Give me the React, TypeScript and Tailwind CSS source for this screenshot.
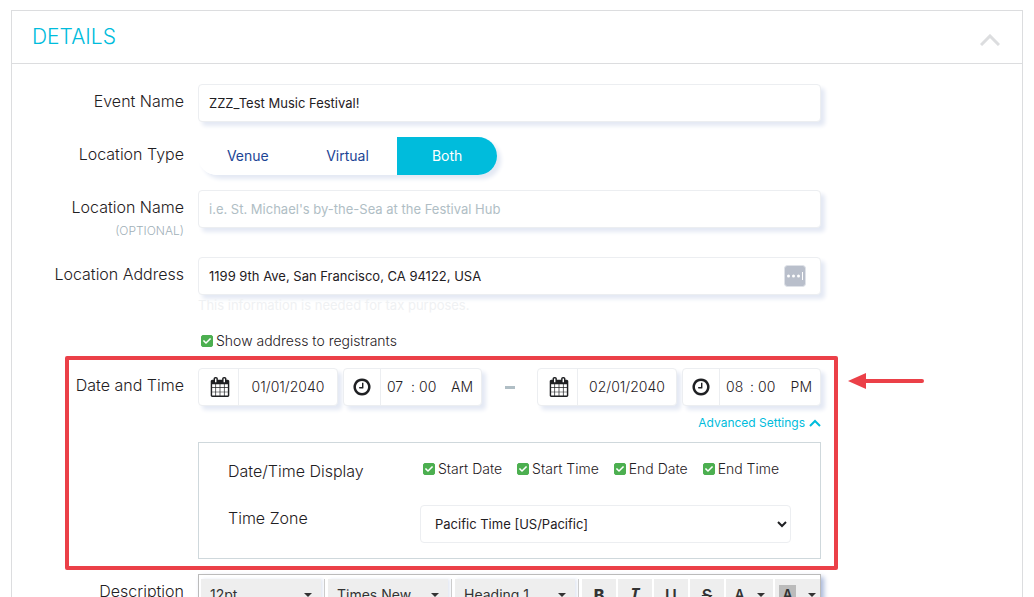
import { useState } from "react";
import type { ReactNode } from "react";
import clsx from "clsx";
import { FaCheck } from "react-icons/fa";

const locationTypes = ["Venue", "Virtual", "Both"];

const displayOptions = ["Start Date", "Start Time", "End Date", "End Time"];

const fieldClass =
  "h-[38px] w-full rounded border border-[#eceef1] bg-white px-[10px] text-[13px] text-[#1f2023] shadow-[4px_4px_4px_#e4e9f4] outline-none placeholder:text-[#b0bec5]";

function CalendarIcon() {
  return (
    <svg viewBox="0 0 1792 1792" className="h-5 w-5" fill="currentColor" aria-hidden="true">
      <path d="M192 1664h288v-288h-288v288zm352 0h320v-288h-320v288zm-352-352h288v-320h-288v320zm352 0h320v-320h-320v320zm-352-384h288v-288h-288v288zm736 736h320v-288h-320v288zm-384-736h320v-288h-320v288zm768 736h288v-288h-288v288zm-384-352h320v-320h-320v320zm-352-864v-288q0-13-9.5-22.5t-22.5-9.5h-64q-13 0-22.5 9.5t-9.5 22.5v288q0 13 9.5 22.5t22.5 9.5h64q13 0 22.5-9.5t9.5-22.5zm736 864h288v-320h-288v320zm-384-384h320v-288h-320v288zm384 0h288v-288h-288v288zm32-480v-288q0-13-9.5-22.5t-22.5-9.5h-64q-13 0-22.5 9.5t-9.5 22.5v288q0 13 9.5 22.5t22.5 9.5h64q13 0 22.5-9.5t9.5-22.5zm384-64v1280q0 52-38 90t-90 38h-1408q-52 0-90-38t-38-90v-1280q0-52 38-90t90-38h128v-96q0-66 47-113t113-47h64q66 0 113 47t47 113v96h384v-96q0-66 47-113t113-47h64q66 0 113 47t47 113v96h128q52 0 90 38t38 90z" />
    </svg>
  );
}

function ClockIcon() {
  return (
    <svg viewBox="0 0 1792 1792" className="h-5 w-5" fill="currentColor" aria-hidden="true">
      <path d="M1024 544v448q0 14-9 23t-23 9h-320q-14 0-23-9t-9-23v-64q0-14 9-23t23-9h224v-352q0-14 9-23t23-9h64q14 0 23 9t9 23zm416 352q0-148-73-273t-198-198-273-73-273 73-198 198-73 273 73 273 198 198 273 73 273-73 198-198 73-273zm224 0q0 209-103 385.5t-279.5 279.5-385.5 103-385.5-103-279.5-279.5-103-385.5 103-385.5 279.5-279.5 385.5-103 385.5 103 279.5 279.5 103 385.5z" />
    </svg>
  );
}

function Caret() {
  return (
    <svg viewBox="0 0 8 4" className="h-1 w-2" fill="#333" aria-hidden="true">
      <path d="M0 0h8L4 4z" />
    </svg>
  );
}

function Row({ label, htmlFor, hint, children }: {
  label: string;
  htmlFor?: string;
  hint?: string;
  children: ReactNode;
}) {
  return (
    <div className="grid grid-cols-[172px_minmax(0,1fr)] gap-x-[14px]">
      <div className="pt-[5px] text-right">
        <label htmlFor={htmlFor} className="block text-base leading-6 font-light text-[#1f2023]">
          {label}
        </label>
        {hint && <p className="pt-1 text-xs leading-4 font-light text-[#9fb0b8]">{hint}</p>}
      </div>
      <div>{children}</div>
    </div>
  );
}

function CheckOption({ label }: { label: string }) {
  return (
    <label className="flex items-center gap-[3px] text-sm leading-5 font-light text-[#1f2023]">
      <span className="grid place-items-center">
        <input
          type="checkbox"
          defaultChecked
          className="peer col-start-1 row-start-1 h-3 w-3 appearance-none rounded-xs border border-[#4caf50] checked:bg-[#4caf50]"
        />
        <FaCheck
          className="pointer-events-none col-start-1 row-start-1 hidden h-2 w-2 text-white peer-checked:block"
          aria-hidden="true"
        />
      </span>
      {label}
    </label>
  );
}

function DateTime({ name, date, hour, minute, period }: {
  name: string;
  date: string;
  hour: string;
  minute: string;
  period: string;
}) {
  const boxClass =
    "flex h-[38px] rounded border border-[#eceef1] bg-white text-[#1f2023] shadow-[4px_4px_4px_#e4e9f4]";
  return (
    <div className="flex gap-[5px]">
      <div className={clsx(boxClass, "w-[140px]")}>
        <span className="flex w-10 shrink-0 items-center justify-center border-r border-[#eceef1] pl-[2px]">
          <CalendarIcon />
        </span>
        <input
          aria-label={`${name} date`}
          defaultValue={date}
          className="w-full min-w-0 text-center text-sm font-light outline-none"
        />
      </div>
      <div className={clsx(boxClass, "w-[139px]")}>
        <span className="flex w-[37px] shrink-0 items-center justify-center border-r border-[#eceef1]">
          <ClockIcon />
        </span>
        <span className="flex min-w-0 flex-1 items-center pr-2 pl-[6px] text-sm font-light">
          <input aria-label={`${name} hour`} defaultValue={hour} className="w-5 outline-none" />
          <span className="w-3 text-center">:</span>
          <input aria-label={`${name} minute`} defaultValue={minute} className="w-5 outline-none" />
          <input
            aria-label={`${name} AM or PM`}
            defaultValue={period}
            className="ml-auto w-7 text-right outline-none"
          />
        </span>
      </div>
    </div>
  );
}

function ToolbarSelect({ label, value }: { label: string; value: string }) {
  return (
    <span className="flex items-center gap-[3px]">
      <span className="grid w-[120px] items-center bg-[#eee] shadow-[2px_0_3px_#e4e9f4]">
        <select
          aria-label={label}
          className="col-start-1 row-start-1 h-8 w-full appearance-none px-[9px] text-sm text-[#333] outline-none"
        >
          <option>{value}</option>
        </select>
        <span className="pointer-events-none col-start-1 row-start-1 mr-[9px] justify-self-end">
          <Caret />
        </span>
      </span>
      <span className="h-8 w-px bg-[#ccc]" />
    </span>
  );
}

function ToolbarButton({ label, className, children }: {
  label: string;
  className?: string;
  children: ReactNode;
}) {
  return (
    <button
      type="button"
      aria-label={label}
      className={clsx(
        "flex h-8 items-center justify-center bg-[#eee] text-base font-semibold text-[#333]",
        className ?? "w-[34px]"
      )}
    >
      {children}
    </button>
  );
}

export default function App() {
  const [locationType, setLocationType] = useState("Both");

  return (
    <main className="h-screen overflow-hidden bg-white px-[11px] pt-[10px] font-['Inter','Liberation_Sans',sans-serif]">
      <section className="border border-[#dcdddf]">
        <header className="flex h-[53px] items-center justify-between border-b border-[#dcdddf] pr-[22px] pl-5">
          <h2 className="text-[21px] font-light text-[#00bcdc]">DETAILS</h2>
          <button type="button" aria-label="Collapse details" className="pt-[6px]">
            <svg viewBox="0 0 20 12" className="h-3 w-5" fill="none" stroke="#dcdddf" strokeWidth="3">
              <path d="M1 11l9-9 9 9" />
            </svg>
          </button>
        </header>

        <form className="flex flex-col pt-5 pr-[201px]">
          <Row label="Event Name" htmlFor="event-name">
            <input id="event-name" defaultValue="ZZZ_Test Music Festival!" className={fieldClass} />
          </Row>

          <div className="pt-[15px]">
            <Row label="Location Type">
              <div className="grid h-[38px] w-[299px] grid-cols-3 overflow-hidden rounded-full text-sm shadow-[4px_4px_4px_#e4e9f4]">
                {locationTypes.map((type) => (
                  <button
                    key={type}
                    type="button"
                    aria-pressed={type === locationType}
                    onClick={() => setLocationType(type)}
                    className={type === locationType ? "bg-[#00bcdc] text-white" : "bg-white text-[#1c4595]"}
                  >
                    {type}
                  </button>
                ))}
              </div>
            </Row>
          </div>

          <div className="pt-[15px]">
            <Row label="Location Name" htmlFor="location-name" hint="(OPTIONAL)">
              <input
                id="location-name"
                placeholder="i.e. St. Michael's by-the-Sea at the Festival Hub"
                className={fieldClass}
              />
            </Row>
          </div>

          <div className="pt-[18px]">
            <Row label="Location Address" htmlFor="location-address">
              <div className="grid items-center">
                <input
                  id="location-address"
                  defaultValue="1199 9th Ave, San Francisco, CA 94122, USA"
                  className={clsx(fieldClass, "col-start-1 row-start-1")}
                />
                <svg viewBox="0 0 22 22" className="col-start-1 row-start-1 mr-[15px] h-[22px] w-[22px] justify-self-end" aria-hidden="true">
                  <rect x="0.5" y="0.5" width="21" height="21" rx="3" fill="#b9bfcb" stroke="#dfe2e8" />
                  <circle cx="4.5" cy="11" r="1.5" fill="#fff" />
                  <circle cx="9.5" cy="11" r="1.5" fill="#fff" />
                  <circle cx="14.5" cy="11" r="1.5" fill="#fff" />
                  <path d="M18.5 7v8" stroke="#fff" />
                </svg>
              </div>
              <p className="text-[13px] leading-5 text-[#eff1f3]">This information is needed for tax purposes.</p>
              <div className="pt-4 pl-[3px]">
                <CheckOption label="Show address to registrants" />
              </div>
            </Row>
          </div>

          <div className="relative pt-[17px]">
            <Row label="Date and Time">
              <div className="flex items-center justify-between">
                <DateTime name="Start" date="01/01/2040" hour="07" minute="00" period="AM" />
                <span className="h-[3px] w-[10px] bg-[#b0bec5]" />
                <DateTime name="End" date="02/01/2040" hour="08" minute="00" period="PM" />
              </div>
              <div className="flex justify-end pt-2">
                <a href="#advanced" className="flex items-center gap-1 text-xs leading-[18px] text-[#00bcdc]">
                  Advanced Settings
                  <svg viewBox="0 0 12 8" className="h-2 w-3" fill="none" stroke="currentColor" strokeWidth="2" aria-hidden="true">
                    <path d="M1 7l5-5 5 5" />
                  </svg>
                </a>
              </div>
              <div id="advanced" className="mt-[10px] border border-[#cfd8dc] pt-4 pr-[29px] pb-[15px] pl-[29px]">
                <div className="flex items-start">
                  <span className="w-[192px] shrink-0 text-base leading-6 font-light text-[#1f2023]">Date/Time Display</span>
                  <div className="flex flex-1 gap-[15px] pl-[3px]">
                    {displayOptions.map((option) => (
                      <CheckOption key={option} label={option} />
                    ))}
                  </div>
                </div>
                <div className="flex items-start pt-[22px]">
                  <label htmlFor="time-zone" className="w-[192px] shrink-0 pt-[1px] text-base leading-6 font-light text-[#1f2023]">
                    Time Zone
                  </label>
                  <select
                    id="time-zone"
                    className="h-[38px] min-w-0 flex-1 rounded border border-[#eceef1] bg-white pl-[10px] text-[13px] text-[#1f2023] outline-none"
                  >
                    <option>Pacific Time [US/Pacific]</option>
                  </select>
                </div>
              </div>
            </Row>

            {/* callout around the date settings */}
            <div className="pointer-events-none absolute top-[5px] -right-[17px] -bottom-[11px] left-[53px] rounded-xs border-4 border-[#eb4048]" />
            <svg viewBox="0 0 76 18" className="absolute top-[21px] -right-[103px] h-[18px] w-[76px]" aria-hidden="true">
              <path d="M0 9L18 1v16z" fill="#eb4048" />
              <path d="M16 9h58" stroke="#eb4048" strokeWidth="4" strokeLinecap="round" />
            </svg>
          </div>

          <div className="pt-[15px]">
            <Row label="Description" htmlFor="description">
              <div className="border border-[#bbb] shadow-[3px_3px_5px_#a9b8da]">
                <div className="flex gap-[2px] overflow-hidden pt-1 pl-[2px]">
                  <div className="flex gap-[3px] pr-[1px]">
                    <ToolbarSelect label="Font size" value="12pt" />
                    <ToolbarSelect label="Font family" value="Times New" />
                    <ToolbarSelect label="Block format" value="Heading 1" />
                  </div>
                  <ToolbarButton label="Bold">
                    <span className="font-extrabold">B</span>
                  </ToolbarButton>
                  <ToolbarButton label="Italic">
                    <span className="font-['Liberation_Mono',monospace] text-lg font-bold italic">I</span>
                  </ToolbarButton>
                  <ToolbarButton label="Underline">
                    <span className="underline">U</span>
                  </ToolbarButton>
                  <ToolbarButton label="Strikethrough">
                    <span className="line-through">S</span>
                  </ToolbarButton>
                  <ToolbarButton label="Text color" className="w-[47px] gap-3">
                    <span className="text-sm">A</span>
                    <Caret />
                  </ToolbarButton>
                  <ToolbarButton label="Background color" className="min-w-0 flex-1 gap-3">
                    <span className="bg-[#bbb] px-[3px] text-sm">A</span>
                    <Caret />
                  </ToolbarButton>
                </div>
                <textarea id="description" className="block h-40 w-full p-3 text-sm outline-none" />
              </div>
            </Row>
          </div>
        </form>
      </section>
    </main>
  );
}
